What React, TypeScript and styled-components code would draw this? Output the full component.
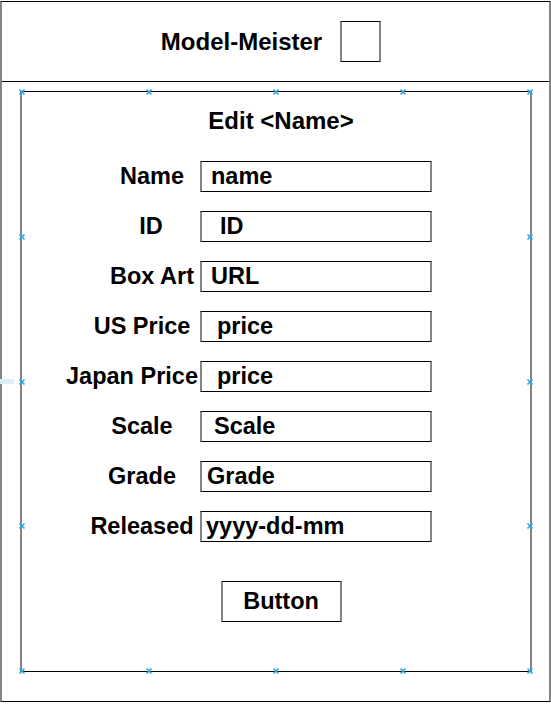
import styled, { createGlobalStyle } from "styled-components";

const GlobalStyle = createGlobalStyle`
  html, body {
    margin: 0;
    padding: 0;
    background: #ffffff;
    font-family: "Liberation Sans", Arial, sans-serif;
  }
`;

const Frame = styled.div`
  position: relative;
  box-sizing: border-box;
  margin-top: 1px;
  width: 551px;
  height: 701px;
  border-top: 1px solid #000000;
  border-bottom: 1px solid #000000;
  border-left: 2px solid #858585;
  border-right: 2px solid #858585;
  display: flex;
  flex-direction: column;
`;

const Header = styled.header`
  box-sizing: border-box;
  height: 80px;
  border-bottom: 1px solid #000000;
  display: flex;
  justify-content: center;
  align-items: center;
  padding-right: 9px;
`;

const AppTitle = styled.h1`
  margin: 0;
  font-size: 24px;
  font-weight: bold;
  color: #000000;
  line-height: 30px;
`;

const LogoBox = styled.div`
  box-sizing: border-box;
  width: 41px;
  height: 41px;
  margin-left: 18px;
  border-top: 1px solid #000000;
  border-bottom: 1px solid #000000;
  border-left: 2px solid #858585;
  border-right: 2px solid #858585;
`;

const Panel = styled.section`
  position: relative;
  box-sizing: border-box;
  margin: 9px 17px 0 18px;
  height: 581px;
  border-top: 1px solid #000000;
  border-bottom: 1px solid #000000;
  border-left: 2px solid #858585;
  border-right: 2px solid #858585;
  display: flex;
  flex-direction: column;
`;

const PanelTitle = styled.h2`
  margin: 14px 0 0 10px;
  align-self: center;
  font-size: 24px;
  font-weight: bold;
  line-height: 30px;
  color: #000000;
`;

const Form = styled.div`
  margin-top: 25px;
  padding-left: 58px;
  display: flex;
  flex-direction: column;
  gap: 19px;
`;

const Row = styled.div`
  display: grid;
  grid-template-columns: 120px 232px;
  height: 31px;
  align-items: center;
`;

const Label = styled.div<{ $nudge: number }>`
  display: flex;
  justify-content: center;
  white-space: nowrap;
  font-size: 23.5px;
  font-weight: bold;
  color: #000000;
  transform: translateX(${({ $nudge }) => $nudge}px);
`;

const Field = styled.input<{ $indent: number }>`
  box-sizing: border-box;
  width: 232px;
  height: 31px;
  margin: 0;
  padding: 0 0 0 ${({ $indent }) => $indent}px;
  border: none;
  border-top: 1px solid #000000;
  border-bottom: 1px solid #000000;
  border-left: 2px solid #858585;
  border-right: 2px solid #858585;
  background: #ffffff;
  font-family: "Liberation Sans", Arial, sans-serif;
  font-size: 23.5px;
  font-weight: bold;
  color: #000000;
  outline: none;
`;

const ButtonRow = styled.div`
  margin-top: 39px;
  padding-left: 10px;
  display: flex;
  justify-content: center;
`;

const SubmitButton = styled.button`
  box-sizing: border-box;
  width: 121px;
  height: 41px;
  margin: 0;
  padding: 0;
  background: #ffffff;
  border: none;
  border-top: 1px solid #000000;
  border-bottom: 1px solid #000000;
  border-left: 2px solid #858585;
  border-right: 2px solid #858585;
  font-family: "Liberation Sans", Arial, sans-serif;
  font-size: 23.5px;
  font-weight: bold;
  color: #000000;
  cursor: pointer;
`;

const Handle = styled.svg<{ $x: string; $y: string }>`
  position: absolute;
  left: ${({ $x }) => $x};
  top: ${({ $y }) => $y};
  width: 6px;
  height: 6px;
  transform: translate(-50%, -50%);
  overflow: visible;
`;

const GuideMark = styled.div`
  position: absolute;
  left: -2px;
  top: 377px;
  width: 14px;
  height: 5px;
  background: #dbeefb;
`;

const fields = [
  { label: "Name", value: "name", nudge: 12, indent: 9 },
  { label: "ID", value: "ID", nudge: 11, indent: 18 },
  { label: "Box Art", value: "URL", nudge: 12, indent: 9 },
  { label: "US Price", value: "price", nudge: 2, indent: 15 },
  { label: "Japan Price", value: "price", nudge: -8, indent: 15 },
  { label: "Scale", value: "Scale", nudge: 2, indent: 12 },
  { label: "Grade", value: "Grade", nudge: 2, indent: 5 },
  { label: "Released", value: "yyyy-dd-mm", nudge: 2, indent: 4 },
];

const quarters = ["0%", "25%", "50%", "75%", "100%"];
const handles = [
  ...quarters.map((x) => ({ x, y: "0%" })),
  ...quarters.map((x) => ({ x, y: "100%" })),
  ...quarters.slice(1, 4).map((y) => ({ x: "0%", y })),
  ...quarters.slice(1, 4).map((y) => ({ x: "100%", y })),
];

export default function App() {
  return (
    <>
      <GlobalStyle />
      <Frame>
        <Header>
          <AppTitle>Model-Meister</AppTitle>
          <LogoBox />
        </Header>
        <Panel>
          <PanelTitle>Edit &lt;Name&gt;</PanelTitle>
          <Form>
            {fields.map((f) => (
              <Row key={f.label}>
                <Label $nudge={f.nudge}>{f.label}</Label>
                <Field $indent={f.indent} defaultValue={f.value} readOnly />
              </Row>
            ))}
          </Form>
          <ButtonRow>
            <SubmitButton>Button</SubmitButton>
          </ButtonRow>
          {handles.map((h, i) => (
            <Handle key={i} $x={h.x} $y={h.y} viewBox="0 0 6 6">
              <path d="M0.5 0.5 L5.5 5.5 M5.5 0.5 L0.5 5.5" stroke="#2aa4e4" strokeWidth="1.6" />
            </Handle>
          ))}
        </Panel>
        <GuideMark />
      </Frame>
    </>
  );
}
